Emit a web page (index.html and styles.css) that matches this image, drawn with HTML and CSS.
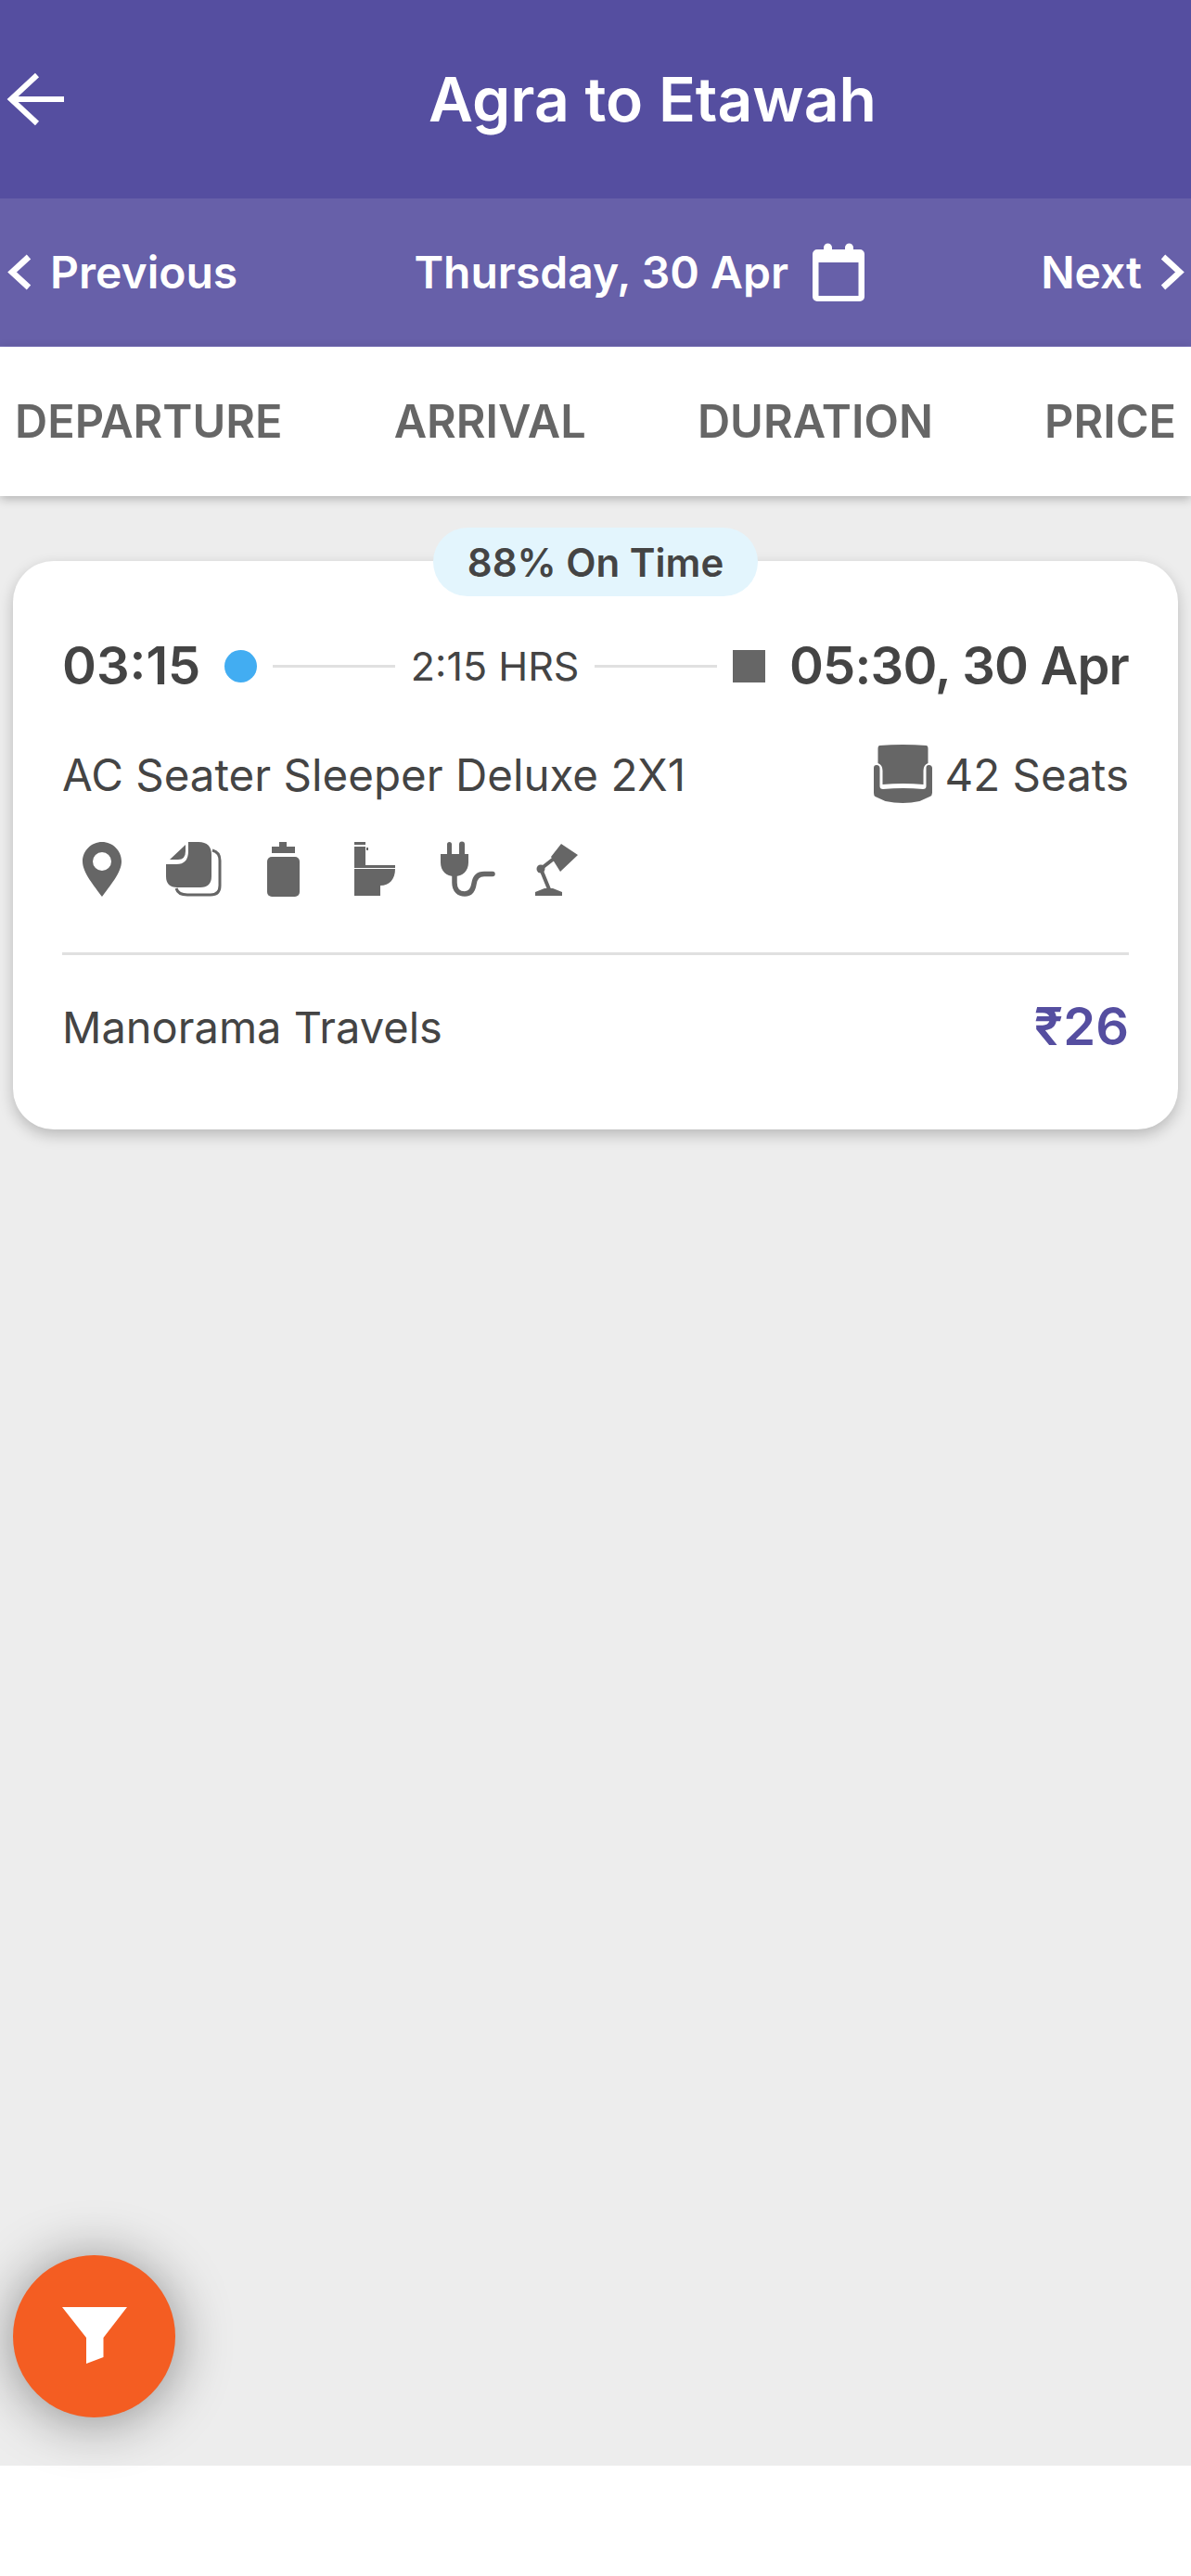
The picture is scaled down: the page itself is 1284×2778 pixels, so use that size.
FILE: index.html
```html
<!DOCTYPE html>
<html lang="en">
<head>
    <meta charset="UTF-8">
    <meta name="viewport" content="width=device-width, initial-scale=1.0">
    <title>Agra to Etawah</title>
    <link rel="stylesheet" href="styles.css">
</head>
<body>
    <div class="app">
        <div class="topbar">
            <svg class="back" viewBox="0 0 64 58"><path d="M63 29H5M34 3L6 29l28 26" fill="none" stroke="#fff" stroke-width="6"/></svg>
            <h1 class="title">Agra to Etawah</h1>
        </div>
        <div class="datebar">
            <a href="javascript:;" class="nav-link">
                <svg class="chevron" viewBox="0 0 26 39"><path d="M23 3L5 19.500 23 36" fill="none" stroke="#fff" stroke-width="6.500"/></svg>
                Previous
            </a>
            <div class="nav-link date">
                Thursday, 30 Apr
                <svg class="calendar" viewBox="0 0 56 63"><path fill="#fff" fill-rule="evenodd" d="M5 7h7V5a4.500 4.500 0 0 1 9 0v2h14V5a4.500 4.500 0 0 1 9 0v2h7a5 5 0 0 1 5 5v46a5 5 0 0 1-5 5H5a5 5 0 0 1-5-5V12a5 5 0 0 1 5-5zM6.500 21v36h43V21z"/></svg>
            </div>
            <a href="javascript:;" class="nav-link next">
                Next
                <svg class="chevron" viewBox="0 0 26 39"><path d="M3 3l18 16.500L3 36" fill="none" stroke="#fff" stroke-width="6.500"/></svg>
            </a>
        </div>
        <div class="tabs">
            <a href="javascript:;" class="tab">DEPARTURE</a>
            <a href="javascript:;" class="tab">ARRIVAL</a>
            <a href="javascript:;" class="tab">DURATION</a>
            <a href="javascript:;" class="tab">PRICE</a>
        </div>
        <div class="list">
            <div class="card">
                <span class="badge">88% On Time</span>
                <div class="journey">
                    <span class="time dep">03:15</span>
                    <span class="dot"></span>
                    <span class="line"></span>
                    <span class="duration">2:15 HRS</span>
                    <span class="line"></span>
                    <span class="square"></span>
                    <span class="time arr">05:30, 30 Apr</span>
                </div>
                <div class="bus">
                    <span>AC Seater Sleeper Deluxe 2X1</span>
                    <span class="seats">
                        <svg class="seat" viewBox="0 0 63 64"><path fill="#666" d="M6 1q25-2 51 0 1.500.5 1.500 3v16q-5 2-5 8v15q-22-2-44 0V28q0-6-5-8V4q0-2.500 1.500-3z"/><path fill="#666" d="M0 25q0-3 3-3t3.500 3v20q0 3 3.500 3 22-2 43 0 3.500 0 3.500-3V25q0-3 3-3t3.500 3v27q0 3-2.500 4l-11 5q-18 4-37 0l-11-5Q0 55 0 52z"/></svg>
                        42 Seats
                    </span>
                </div>
                <div class="amenities">
                    <svg class="amenity" viewBox="0 0 60 60"><path fill="#666" fill-rule="evenodd" d="M30 0C18.400 0 9 9.400 9 21c0 12 13 27 21 38 8-11 21-26 21-38C51 9.400 41.600 0 30 0zm0 11a10 10 0 1 1 0 20 10 10 0 0 1 0-20z"/></svg>
                    <svg class="amenity" viewBox="0 0 60 60"><path fill="#666" d="M25 0h11q14 0 14 14v23q0 12-12 12H13Q1 49 1 37V24h11q13 0 13-14zM22 3L5 19h9q8 0 8-9z"/><path d="M51 9q8 2 8 11v27q0 10-10 10H24q-10 0-12-7" fill="none" stroke="#666" stroke-width="3"/></svg>
                    <svg class="amenity" viewBox="0 0 60 60"><path fill="#666" d="M25 0h8v5h9v7H17V5h8z"/><rect fill="#666" x="12" y="16" width="35" height="43" rx="5"/></svg>
                    <svg class="amenity" viewBox="0 0 60 60"><path fill="#666" d="M8 0h12v3H8zM8 5h12v20H8zM21 6h2v3h-2zM8 25h44v3H8zM8 29h44c0 11-6 18-16 18v11H8z"/></svg>
                    <svg class="amenity" viewBox="0 0 60 60"><g transform="translate(2 0)"><path fill="#666" d="M8 2.500a2.500 2.500 0 0 1 5 0V14H8zM21 2.500a3 3 0 0 1 6 0V14h-6zM1 13h30v9c0 9-6 15-15 15S1 31 1 22z"/><path d="M16 36v8c0 8 5 12 11 12s9-4 10-11 5-10.500 11-10.500h9" fill="none" stroke="#666" stroke-width="5.500" stroke-linecap="round"/></g></svg>
                    <svg class="amenity" viewBox="0 0 60 60"><path fill="#666" d="M35 2l18 12-19 18-10-16zM7 58v-4l10-4h9l10 4v4z"/><path d="M13 29l14-11M13 29l9 22" fill="none" stroke="#666" stroke-width="4"/><circle fill="#666" cx="13" cy="29" r="4.500"/></svg>
                </div>
                <div class="divider"></div>
                <div class="operator">
                    <span>Manorama Travels</span>
                    <span class="price">₹26</span>
                </div>
            </div>
        </div>
        <div class="footer"></div>
        <a href="javascript:;" class="fab">
            <svg viewBox="0 0 70 61"><path fill="#fff" d="M0 0h70L44.500 33v21L26 61V33z"/></svg>
        </a>
    </div>
</body>
</html>
```

FILE: styles.css
```css
*{
    box-sizing: border-box;
}
body{
    margin: 0;
    font-family: Inter, Roboto, sans-serif;
    color: #444;
}
a{
    color: inherit;
    text-decoration: none;
}
.app{
    height: 100vh;
    display: flex;
    flex-direction: column;
    position: relative;
    overflow: hidden;
    background-color: #fff;
}
.topbar{
    height: 214px;
    flex: none;
    display: flex;
    align-items: center;
    padding-left: 6px;
    background-color: #554ea0;
    color: #fff;
}
.back{
    width: 64px;
    height: 58px;
}
.title{
    margin: 0 0 0 392px;
    font-size: 66px;
    font-weight: 600;
}
.datebar{
    height: 160px;
    flex: none;
    display: flex;
    align-items: center;
    justify-content: space-between;
    padding: 0 7px 0 8px;
    background-color: #6760a9;
    border-bottom: 1px solid #7b74bd;
    color: #fff;
}
.nav-link{
    display: flex;
    align-items: center;
    gap: 20px;
    font-size: 48px;
    font-weight: 600;
}
.date{
    gap: 26px;
}
.chevron{
    width: 26px;
    height: 39px;
}
.calendar{
    width: 56px;
    height: 63px;
}
.tabs{
    height: 161px;
    flex: none;
    display: flex;
    align-items: center;
    justify-content: space-between;
    padding: 0 16px;
    background-color: #fff;
    box-shadow: 0 3px 10px rgba(0,0,0,.25);
    position: relative;
    color: #666;
    font-size: 48.7px;
    font-weight: 600;
}
.list{
    flex: 1;
    padding: 70px 14px 0;
    background-color: #ededed;
}
.card{
    position: relative;
    padding: 83px 53px 81px;
    background-color: #fff;
    border-radius: 44px;
    box-shadow: 0 6px 16px rgba(0,0,0,.22);
}
.badge{
    position: absolute;
    left: 453px;
    top: -36px;
    width: 350px;
    height: 74px;
    display: flex;
    align-items: center;
    justify-content: center;
    background-color: #e3f5fd;
    border-radius: 37px;
    font-size: 42px;
    font-weight: 600;
}
.journey{
    height: 60px;
    display: flex;
    align-items: center;
    gap: 17px;
}
.time{
    font-size: 56px;
    font-weight: 600;
}
.dep{
    margin-right: 9px;
}
.arr{
    margin-left: 9px;
    letter-spacing: -.8px;
}
.dot{
    width: 35px;
    height: 35px;
    border-radius: 50%;
    background-color: #42adf2;
}
.square{
    width: 35px;
    height: 35px;
    background-color: #666;
}
.line{
    flex: 1;
    height: 3px;
    background-color: #e0e0e0;
}
.duration{
    font-size: 43px;
}
.bus{
    height: 64px;
    margin-top: 55px;
    display: flex;
    align-items: center;
    justify-content: space-between;
    font-size: 47.5px;
}
.seats{
    display: flex;
    align-items: center;
    gap: 14px;
}
.seat{
    width: 63px;
    height: 64px;
}
.amenities{
    margin-top: 41px;
    padding-left: 13px;
    display: flex;
    gap: 38px;
}
.amenity{
    width: 60px;
    height: 60px;
    overflow: visible;
}
.divider{
    height: 3px;
    margin-top: 59px;
    background-color: #e0e0e0;
}
.operator{
    height: 60px;
    margin-top: 47px;
    display: flex;
    align-items: center;
    justify-content: space-between;
    font-size: 47px;
}
.price{
    color: #554ea0;
    font-size: 56px;
    font-weight: 600;
}
.footer{
    height: 119px;
    flex: none;
    background-color: #fff;
}
.fab{
    position: absolute;
    left: 14px;
    top: 2432px;
    width: 175px;
    height: 175px;
    display: flex;
    align-items: center;
    justify-content: center;
    background-color: #f45d22;
    border-radius: 50%;
    box-shadow: 0 4px 60px rgba(0,0,0,.42);
}
.fab svg{
    width: 70px;
    height: 61px;
    margin-bottom: 3px;
}
```
